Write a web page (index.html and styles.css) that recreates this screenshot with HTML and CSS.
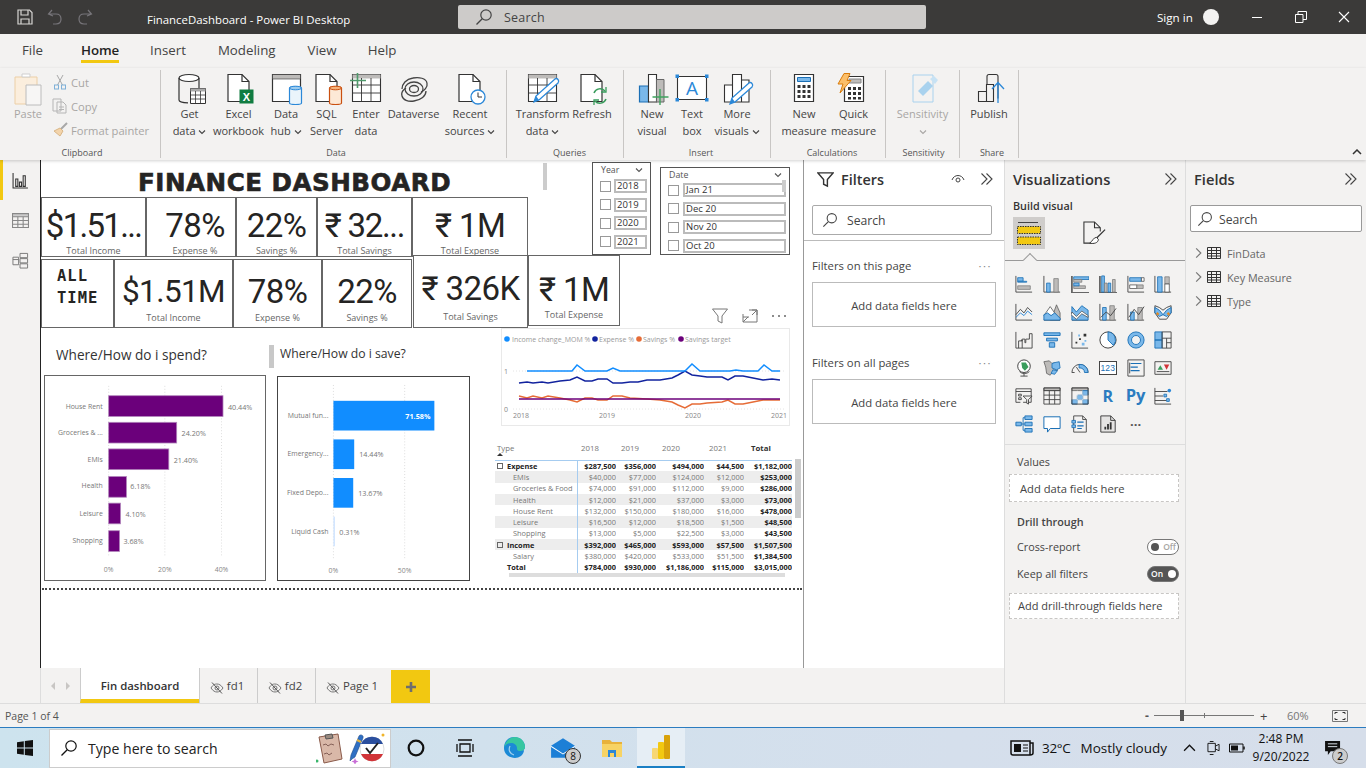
FILE: index.html
```html
<!DOCTYPE html>
<html lang="en">
<head>
<meta charset="utf-8">
<title>FinanceDashboard - Power BI Desktop</title>
<link rel="stylesheet" href="styles.css">
</head>
<body>
<svg class="defs" width="0" height="0" aria-hidden="true">
  <symbol id="search" viewBox="0 0 18 18"><circle cx="11" cy="7" r="5.2" fill="none" stroke="currentColor" stroke-width="1.2"/><path d="M7.2 10.8 1.5 16.5" fill="none" stroke="currentColor" stroke-width="1.3"/></symbol>
  <symbol id="dbl" viewBox="0 0 14 14"><path d="M1.5 1.5 7 7l-5.5 5.5M6.5 1.5 12 7l-5.500 5.500" fill="none" stroke="currentColor" stroke-width="1.1"/></symbol>
  <symbol id="tbl" viewBox="0 0 14 14"><path d="M.5 1.500h13v11H.5zM.5 4.500h13M.5 7.500h13M.500 10h13M4.500 1.500v11M9.500 1.500v11" fill="none" stroke="currentColor"/></symbol>
  <symbol id="chev" viewBox="0 0 8 6"><path d="M1 1.500 4 4.500l3-3" fill="none" stroke="currentColor" stroke-width="1.100"/></symbol>
  <symbol id="hide" viewBox="0 0 14 14"><path d="M1 7c2-3.500 4-4 6-4s4 1 6 4c-2 3-4 4-6 4s-4-1-6-4z" fill="none" stroke="#777"/><circle cx="7" cy="7" r="2" fill="none" stroke="#777"/><path d="M2 1.500 12 12.500" stroke="#555"/></symbol>
  <symbol id="doc" viewBox="0 0 36 34"><path d="M7 1.500h14l7 7v20H7z" fill="#fff" stroke="#333" stroke-width="1.200"/><path d="M21 1.500v7h7" fill="none" stroke="#333" stroke-width="1.200"/></symbol>
</svg>

<header class="titlebar">
  <div class="qa">
    <svg class="qa-ic" viewBox="0 0 16 16"><path d="M1 1h11.500L15 3.500V15H1zM4 1v5h7V1M4 15v-5h8v5" fill="none" stroke="#d8d6d4" stroke-width="1.200"/></svg>
    <svg class="qa-ic dim" viewBox="0 0 16 16"><path d="M5 1 1.500 5 6 7M2 5h7c3 0 5 2 5 5s-2 5-5 5H6" fill="none" stroke="#77757a" stroke-width="1.200"/></svg>
    <svg class="qa-ic dim" viewBox="0 0 16 16"><path d="M11 1l3.500 4L10 7M14 5H7c-3 0-5 2-5 5s2 5 5 5h3" fill="none" stroke="#77757a" stroke-width="1.200"/></svg>
  </div>
  <div class="doc-title">FinanceDashboard - Power BI Desktop</div>
  <div class="search-top"><svg class="s18"><use href="#search"/></svg><span>Search</span></div>
  <div class="signin">Sign in</div>
  <div class="avatar"></div>
  <div class="wc">
    <svg viewBox="0 0 12 12" class="wc-i"><path d="M1 6.500h10" stroke="#fff"/></svg>
    <svg viewBox="0 0 12 12" class="wc-i"><path d="M.5 3.500h7.500v8H.5zM3 3.500v-3h8.500v8H8" fill="none" stroke="#fff"/></svg>
    <svg viewBox="0 0 12 12" class="wc-i"><path d="M1 1l10 10M11 1 1 11" stroke="#fff" stroke-width="1.100"/></svg>
  </div>
</header>

<nav class="tabs">
  <span class="t-file">File</span>
  <span class="t-home">Home</span>
  <span class="t-ins">Insert</span>
  <span class="t-mod">Modeling</span>
  <span class="t-view">View</span>
  <span>Help</span>
</nav>

<section class="ribbon">
  <div class="grp g-clip">
    <div class="grp-body">
      <div class="rb w-paste off">
        <svg class="ri" viewBox="0 0 36 34"><path d="M5 4h22v27H5z" fill="#fbeedd" stroke="#eccfa6"/><path d="M12 4h8V1h-8z" fill="#fff" stroke="#cfcfcf"/><path d="M16 12h15v20H16z" fill="#f7f6f5" stroke="#bcbcbc"/></svg>
        <span>Paste</span>
      </div>
      <div class="clip-col off">
        <div class="clip-row"><svg class="ci" viewBox="0 0 16 16"><path d="M5 1l5.500 10M11 1 5.500 11" stroke="#a9a9a9" fill="none"/><rect x="2.500" y="11" width="4" height="4" fill="none" stroke="#7fb0d8"/><rect x="9.500" y="11" width="4" height="4" fill="none" stroke="#7fb0d8"/></svg><span>Cut</span></div>
        <div class="clip-row"><svg class="ci" viewBox="0 0 16 16"><path d="M1 1h8v12H1zM5 4h6l3 3v8H5z" fill="#f3f2f1" stroke="#b5b5b5"/><path d="M7 9h5M7 11.500h5" stroke="#b5b5b5"/></svg><span>Copy</span></div>
        <div class="clip-row"><svg class="ci" viewBox="0 0 16 16"><path d="M15 1 9 7" stroke="#a8a8a8" stroke-width="2"/><path d="M8 6l3 3-3 5L2 9z" fill="#f3d4ab" stroke="#d9b687"/></svg><span>Format painter</span></div>
      </div>
    </div>
    <div class="grp-label">Clipboard</div>
  </div>

  <div class="grp g-data">
    <div class="grp-body">
      <div class="rb w47"><svg class="ri" viewBox="0 0 36 34"><ellipse cx="17" cy="5" rx="10" ry="3.500" fill="#fff" stroke="#333" stroke-width="1.200"/><path d="M7 5v22c0 1.500 4 2.800 9 2.800M27 5v10" fill="none" stroke="#333" stroke-width="1.200"/><path d="M18.500 15.500h15v15h-15z" fill="#fff" stroke="#333"/><path d="M18.500 15.500h15v3h-15z" fill="#aaa"/><path d="M18.500 22h15M18.500 26h15M23.500 18v12M28.500 18v12" stroke="#333" stroke-width=".8"/></svg><span>Get<br>data <svg class="ca"><use href="#chev"/></svg></span></div>
      <div class="rb w51"><svg class="ri" viewBox="0 0 36 34"><use href="#doc"/><rect x="18.500" y="16.500" width="14" height="14" fill="#107c41"/><text class="xl" x="25.500" y="27.500">X</text></svg><span>Excel<br>workbook</span></div>
      <div class="rb w44"><svg class="ri" viewBox="0 0 36 34"><path d="M4.500 1.500h28v27h-28z" fill="#fff" stroke="#333" stroke-width="1.200"/><path d="M4.500 1.500h28v4.500h-28z" fill="#bdbbb9" stroke="#333" stroke-width=".6"/><path d="M21.500 15c0-2 12-2 12 0v15c0 2-12 2-12 0z" fill="#eaf4fb" stroke="#2b88d8" stroke-width="1.200"/><ellipse cx="27.500" cy="15" rx="6" ry="1.800" fill="#9ccbee" stroke="#2b88d8"/></svg><span>Data<br>hub <svg class="ca"><use href="#chev"/></svg></span></div>
      <div class="rb w37"><svg class="ri" viewBox="0 0 36 34"><use href="#doc"/><path d="M20.500 15c0-2 12-2 12 0v15c0 2-12 2-12 0z" fill="#fde9d6" stroke="#ca5010" stroke-width="1.200"/><ellipse cx="26.500" cy="15" rx="6" ry="1.800" fill="#f6b27a" stroke="#ca5010"/></svg><span>SQL<br>Server</span></div>
      <div class="rb w42"><svg class="ri" viewBox="0 0 36 34"><path d="M4.500 1.500h28v27h-28z" fill="#fff" stroke="#333" stroke-width="1.100"/><path d="M4.500 1.500h28v4h-28z" fill="#bdbbb9"/><path d="M4.500 12h28M4.500 20h28M13.500 5v23M23 5v23" stroke="#333" stroke-width=".9"/><path d="M9.500 0v15M2 7.500h16" stroke="#4f9a6b" stroke-width="1.600"/></svg><span>Enter<br>data</span></div>
      <div class="rb w53"><svg class="ri" viewBox="0 0 36 34"><g fill="none" stroke="#444" stroke-width="1.300"><path d="M6 16c0-5 4-10 11-11 6-1 13 0 14 5 1 4-3 8-6 9M30 18c0 5-5 9-12 10-6 1-11-1-12-5-1-3 1-6 4-8"/><ellipse cx="18" cy="16" rx="9" ry="7"/><ellipse cx="18" cy="16" rx="4.500" ry="3.500"/></g></svg><span>Dataverse</span></div>
      <div class="rb w60"><svg class="ri" viewBox="0 0 36 34"><use href="#doc"/><circle cx="26" cy="24" r="7" fill="#fff" stroke="#2b88d8" stroke-width="1.300"/><path d="M26 19.500V24h4" fill="none" stroke="#333"/></svg><span>Recent<br>sources <svg class="ca"><use href="#chev"/></svg></span></div>
    </div>
    <div class="grp-label">Data</div>
  </div>

  <div class="grp g-query">
    <div class="grp-body">
      <div class="rb w53"><svg class="ri" viewBox="0 0 36 34"><path d="M3.500 1.500h28v27h-28z" fill="#fff" stroke="#333" stroke-width="1.100"/><path d="M3.500 1.500h28v4h-28z" fill="#bdbbb9"/><path d="M3.500 12h28M3.500 20h28M12.500 5v23M22 5v23" stroke="#333" stroke-width=".9"/><path d="M9 29l2-6 19-17c2-1.500 5 1.500 3 4L14 27z" fill="#fff" stroke="#2b88d8" stroke-width="1.300"/><path d="M9 29l2-6 3 4z" fill="#2b88d8"/></svg><span>Transform<br>data <svg class="ca"><use href="#chev"/></svg></span></div>
      <div class="rb w46"><svg class="ri" viewBox="0 0 36 34"><use href="#doc"/><path d="M20 20a6.500 6.500 0 0 1 11-2M32 26a6.500 6.500 0 0 1-11 2" fill="none" stroke="#3a9d5d" stroke-width="1.500"/><path d="M32 14v5h-5M20 32v-5h5" fill="none" stroke="#3a9d5d" stroke-width="1.300"/></svg><span>Refresh</span></div>
    </div>
    <div class="grp-label">Queries</div>
  </div>

  <div class="grp g-insert">
    <div class="grp-body">
      <div class="rb w40"><svg class="ri" viewBox="0 0 36 34"><path d="M5.500 13h9v16h-9z" fill="#7ab8ea" stroke="#1a6fb5" stroke-width="1.200"/><path d="M14.500 1.500h8v27.500h-8z" fill="#fff" stroke="#333" stroke-width="1.100"/><path d="M22.500 6.500h7.500v22.500h-7.500z" fill="#bdbbb9" stroke="#666"/><path d="M26 16v16M18.500 24h16" stroke="#3fa35f" stroke-width="1.400"/></svg><span>New<br>visual</span></div>
      <div class="rb w40"><svg class="ri" viewBox="0 0 36 34"><path d="M3.500 3.500h29v23h-29z" fill="#fff" stroke="#333" stroke-width="1.100"/><g fill="#2b88d8"><rect x="1.500" y="1.500" width="3.500" height="3.500"/><rect x="31" y="1.500" width="3.500" height="3.500"/><rect x="1.500" y="25" width="3.500" height="3.500"/><rect x="31" y="25" width="3.500" height="3.500"/></g><text class="tb-a" x="18" y="22">A</text></svg><span>Text<br>box</span></div>
      <div class="rb w50"><svg class="ri" viewBox="0 0 36 34"><path d="M5.500 12h8v17h-8zM13.500 1.500h9v27.500h-9zM22.500 7h7.500v22h-7.500z" fill="#fff" stroke="#333" stroke-width="1.100"/><path d="M11 31l2-6 17-15c2-1.500 5 1.500 3 4L16 29z" fill="#fff" stroke="#2b88d8" stroke-width="1.300"/><path d="M11 31l2-6 3 4z" fill="#2b88d8"/></svg><span>More<br>visuals <svg class="ca"><use href="#chev"/></svg></span></div>
    </div>
    <div class="grp-label">Insert</div>
  </div>

  <div class="grp g-calc">
    <div class="grp-body">
      <div class="rb w50"><svg class="ri" viewBox="0 0 36 34"><path d="M8.500 1.500h19v27h-19z" fill="#fff" stroke="#333" stroke-width="1.200"/><path d="M11.500 4.500h13v4h-13z" fill="#7ab8ea" stroke="#1a6fb5"/><g fill="#333"><rect x="11.500" y="12" width="3" height="3"/><rect x="16.500" y="12" width="3" height="3"/><rect x="21.500" y="12" width="3" height="3"/><rect x="11.500" y="17" width="3" height="3"/><rect x="16.500" y="17" width="3" height="3"/><rect x="21.500" y="17" width="3" height="3"/><rect x="11.500" y="22" width="3" height="3"/><rect x="16.500" y="22" width="3" height="3"/><rect x="21.500" y="22" width="3" height="3"/></g></svg><span>New<br>measure</span></div>
      <div class="rb w49"><svg class="ri" viewBox="0 0 36 34"><path d="M8.500 3.500h19v25h-19z" fill="#fff" stroke="#333" stroke-width="1.200"/><path d="M13 6h12v4H13z" fill="#bdbbb9" stroke="#888"/><g fill="#333"><rect x="12" y="14" width="3" height="3"/><rect x="17" y="14" width="3" height="3"/><rect x="22" y="14" width="3" height="3"/><rect x="12" y="19" width="3" height="3"/><rect x="17" y="19" width="3" height="3"/><rect x="22" y="19" width="3" height="3"/><rect x="12" y="24" width="3" height="2.500"/><rect x="17" y="24" width="3" height="2.500"/><rect x="22" y="24" width="3" height="2.500"/></g><path d="M8 .500h6l-3 7h4L4 20l3-9H2z" fill="#fbbf6a" stroke="#d97c0c"/></svg><span>Quick<br>measure</span></div>
    </div>
    <div class="grp-label">Calculations</div>
  </div>

  <div class="grp g-sens">
    <div class="grp-body">
      <div class="rb w69 off"><svg class="ri" viewBox="0 0 36 34"><path d="M8 2h20v27H8z" fill="none" stroke="#a9d2ee"/><path d="M13 18 23 8l5 5-10 10z" fill="#a9d2ee"/><path d="M25 6l4-3 4 4-3 4z" fill="#c7e2f4"/></svg><span>Sensitivity<br><svg class="ca"><use href="#chev"/></svg></span></div>
    </div>
    <div class="grp-label">Sensitivity</div>
  </div>

  <div class="grp g-share">
    <div class="grp-body">
      <div class="rb w46"><svg class="ri" viewBox="0 0 36 34"><path d="M7.500 18.500h8v10h-8zM15.500 11.500h7v17h-7zM16 11.500V3.500c0-1 .5-2 2-2h7c1.500 0 2 1 2 2v22" fill="none" stroke="#333" stroke-width="1.100"/><path d="M27 30V10M21 16l6-6.500 6 6.500" fill="none" stroke="#2b88d8" stroke-width="1.300"/></svg><span>Publish</span></div>
    </div>
    <div class="grp-label">Share</div>
  </div>
  <svg class="collapse" viewBox="0 0 10 6"><path d="M1 5l4-4 4 4" fill="none" stroke="#333" stroke-width="1.500"/></svg>
</section>

<div class="main">
  <div class="left">
    <div class="work">
      <aside class="rail">
        <div class="rail-i on"><svg viewBox="0 0 16 16"><path d="M1 1v14h14" fill="none" stroke="#333"/><path d="M3.500 6.500h2v7h-2zM7 9.500h2v4H7zM10.500 3.500h2v10h-2z" fill="none" stroke="#333"/></svg></div>
        <div class="rail-i"><svg viewBox="0 0 16 16"><path d="M.5 1.500h15v13H.5z" fill="none" stroke="#888"/><path d="M.5 1.500h15v3H.5z" fill="#ccc" stroke="#888"/><path d="M.5 8h15M.5 11.500h15M5.500 4.500v10M10.500 4.500v10" stroke="#888"/></svg></div>
        <div class="rail-i"><svg viewBox="0 0 18 18"><path d="M8.500 1.500h8v4.500h-8zM8.500 7h8v4.500h-8zM8.500 12.500h8v4.500h-8zM1 5.500h6v8H1zM1 8h6" fill="none" stroke="#777"/></svg></div>
      </aside>

      <main class="canvas">
        <h1 class="dash-title">FINANCE DASHBOARD</h1>
        <div class="thumb-a"></div>

        <div class="card top k1"><div class="val">$1.51...</div><div class="lab">Total Income</div></div>
        <div class="card top k2"><div class="val">78%</div><div class="lab">Expense %</div></div>
        <div class="card top k3"><div class="val">22%</div><div class="lab">Savings %</div></div>
        <div class="card top k4"><div class="val">₹ 32...</div><div class="lab">Total Savings</div></div>
        <div class="card top k5"><div class="val">₹ 1M</div><div class="lab">Total Expense</div></div>

        <div class="card alltime">ALL<br>TIME</div>
        <div class="card sec k6"><div class="val">$1.51M</div><div class="lab">Total Income</div></div>
        <div class="card sec k7"><div class="val">78%</div><div class="lab">Expense %</div></div>
        <div class="card sec k8"><div class="val">22%</div><div class="lab">Savings %</div></div>
        <div class="card sec k9"><div class="val">₹ 326K</div><div class="lab">Total Savings</div></div>
        <div class="card sec k10"><div class="val">₹ 1M</div><div class="lab">Total Expense</div></div>

        <div class="slicer s-year">
          <div class="sl-head"><span>Year</span><svg class="ca"><use href="#chev"/></svg></div>
          <div class="sl-row"><i></i><b>2018</b></div>
          <div class="sl-row"><i></i><b>2019</b></div>
          <div class="sl-row"><i></i><b>2020</b></div>
          <div class="sl-row"><i></i><b>2021</b></div>
        </div>
        <div class="slicer s-date">
          <div class="sl-head"><span>Date</span><svg class="ca"><use href="#chev"/></svg></div>
          <div class="sl-row"><i></i><b>Jan 21</b></div>
          <div class="sl-row"><i></i><b>Dec 20</b></div>
          <div class="sl-row"><i></i><b>Nov 20</b></div>
          <div class="sl-row"><i></i><b>Oct 20</b></div>
          <div class="sl-thumb"></div>
        </div>

        <div class="vis-tools">
          <svg viewBox="0 0 16 16"><path d="M.5 1h15L10 8v7l-4-2V8z" fill="none" stroke="#777"/></svg>
          <svg viewBox="0 0 16 16"><path d="M1 6V14h14V2H7M1 14l5-5M7 9H1M15 2l-5 5M10 2h5v5" fill="none" stroke="#777"/></svg>
          <svg viewBox="0 0 16 16"><circle cx="2" cy="8" r="1" fill="#666"/><circle cx="8" cy="8" r="1" fill="#666"/><circle cx="14" cy="8" r="1" fill="#666"/></svg>
        </div>

        <svg class="linechart" viewBox="0 0 289 98">
          <rect x=".5" y=".5" width="288" height="97" fill="#fff" stroke="#e9e9e9"/>
          <g class="lg">
            <circle cx="6" cy="11" r="2.800" fill="#118dff"/><text x="11" y="13.500">Income change_MOM %</text>
            <circle cx="94" cy="11" r="2.800" fill="#12239e"/><text x="98" y="13.500">Expense %</text>
            <circle cx="138" cy="11" r="2.800" fill="#e66c37"/><text x="142" y="13.500">Savings %</text>
            <circle cx="180" cy="11" r="2.800" fill="#6b007b"/><text x="184" y="13.500">Savings target</text>
          </g>
          <path d="M12 43H283M12 81H283" stroke="#e4e4e4" stroke-dasharray="1 2"/>
          <g class="ax">
            <text x="5" y="46">1</text><text x="5" y="84">0</text>
            <text x="20" y="90">2018</text><text x="106" y="90">2019</text><text x="192" y="90">2020</text><text x="278" y="90">2021</text>
          </g>
          <polyline fill="none" stroke="#e66c37" stroke-width="1.500" points="18,68 26,70 32,68 41,70 47,68 59,70 69,72 76,74 84,70 91,70 97,72 106,72 112,68 121,68 129,70 146,71 159,72 171,74 177,77 184,80 191,76 199,76 206,75 221,74 227,72 234,76 242,76 252,74 262,72 271,72 279,72"/>
          <polyline fill="none" stroke="#6b007b" stroke-width="1.600" points="18,71 279,71"/>
          <polyline fill="none" stroke="#12239e" stroke-width="1.500" points="18,55 26,54 32,55 41,54 47,55 59,53 69,52 76,49 84,53 91,53 97,51 106,51 112,55 121,55 129,54 137,54 146,52 159,52 171,50 177,47 184,43 191,47 199,48 206,49 221,49 227,52 234,48 242,48 252,50 262,52 271,51 279,52"/>
          <polyline fill="none" stroke="#118dff" stroke-width="1.500" points="26,43 71,43 76,37 84,43 106,43 112,40 119,43 184,43 191,36 199,43 229,43 235,42 242,43 257,43 263,37 271,43 279,43"/>
        </svg>

        <div class="hd h-spend">Where/How do i spend?</div>
        <div class="hd-bar"></div>
        <div class="hd h-save">Where/How do i save?</div>

        <svg class="chart c-spend" viewBox="0 0 222 207">
          <path class="gl" d="M64 10V183M121 10V183M178.500 10V183"/>
          <g class="bar-p">
            <rect x="64" y="20" width="116" height="21"/><rect x="64" y="47" width="69" height="21"/><rect x="64" y="74" width="61" height="21"/><rect x="64" y="102" width="18" height="21"/><rect x="64" y="129" width="12" height="21"/><rect x="64" y="157" width="11" height="21"/>
          </g>
          <g class="cat">
            <text x="58" y="33">House Rent</text><text x="58" y="60">Groceries &amp; ...</text><text x="58" y="87">EMIs</text><text x="58" y="114">Health</text><text x="58" y="142">Leisure</text><text x="58" y="169">Shopping</text>
          </g>
          <g class="vl">
            <text x="185" y="34">40.44%</text><text x="138" y="61">24.20%</text><text x="130" y="88">21.40%</text><text x="86" y="115">6.18%</text><text x="81" y="143">4.10%</text><text x="79" y="170">3.68%</text>
          </g>
          <g class="ax mid"><text x="64" y="199">0%</text><text x="121" y="199">20%</text><text x="178.500" y="199">40%</text></g>
        </svg>

        <svg class="chart c-save" viewBox="0 0 193 205">
          <path class="gl" d="M56 8V183M128 8V183"/>
          <g class="bar-b">
            <rect x="56" y="24" width="102" height="30"/><rect x="56" y="63" width="21" height="30"/><rect x="56" y="102" width="20" height="30"/>
          </g>
          <rect x="56" y="141" width="1.500" height="30" fill="#cfe4ff"/>
          <g class="cat">
            <text x="51" y="41">Mutual fun...</text><text x="51" y="80">Emergency...</text><text x="51" y="119">Fixed Depo...</text><text x="51" y="159">Liquid Cash</text>
          </g>
          <g class="vl">
            <text class="inb" x="154" y="42">71.58%</text><text x="82" y="81">14.44%</text><text x="81" y="120">13.67%</text><text x="62" y="160">0.31%</text>
          </g>
          <g class="ax mid"><text x="56" y="198">0%</text><text x="128" y="198">50%</text></g>
        </svg>

        <div class="matrix">
          <table>
            <thead><tr><th class="ty">Type</th><th>2018</th><th>2019</th><th>2020</th><th>2021</th><th class="tt">Total</th></tr></thead>
            <tbody>
              <tr class="grp-r"><td><i class="box"></i>Expense</td><td>$287,500</td><td>$356,000</td><td>$494,000</td><td>$44,500</td><td>$1,182,000</td></tr>
              <tr class="alt"><td class="sub">EMIs</td><td>$40,000</td><td>$77,000</td><td>$124,000</td><td>$12,000</td><td class="tt">$253,000</td></tr>
              <tr><td class="sub">Groceries &amp; Food</td><td>$74,000</td><td>$91,000</td><td>$112,000</td><td>$9,000</td><td class="tt">$286,000</td></tr>
              <tr class="alt"><td class="sub">Health</td><td>$12,000</td><td>$21,000</td><td>$37,000</td><td>$3,000</td><td class="tt">$73,000</td></tr>
              <tr><td class="sub">House Rent</td><td>$132,000</td><td>$150,000</td><td>$180,000</td><td>$16,000</td><td class="tt">$478,000</td></tr>
              <tr class="alt"><td class="sub">Leisure</td><td>$16,500</td><td>$12,000</td><td>$18,500</td><td>$1,500</td><td class="tt">$48,500</td></tr>
              <tr><td class="sub">Shopping</td><td>$13,000</td><td>$5,000</td><td>$22,500</td><td>$3,000</td><td class="tt">$43,500</td></tr>
              <tr class="grp-r alt"><td><i class="box"></i>Income</td><td>$392,000</td><td>$465,000</td><td>$593,000</td><td>$57,500</td><td>$1,507,500</td></tr>
              <tr><td class="sub">Salary</td><td>$380,000</td><td>$420,000</td><td>$533,000</td><td>$51,500</td><td class="tt">$1,384,500</td></tr>
              <tr class="grp-r tot"><td>Total</td><td>$784,000</td><td>$930,000</td><td>$1,186,000</td><td>$115,000</td><td>$3,015,000</td></tr>
            </tbody>
          </table>
          <div class="sb-v"></div>
          <div class="sb-h"></div>
        </div>

        <div class="dotted"></div>
      </main>

      <aside class="filters">
        <div class="f-head">
          <svg class="f-fun" viewBox="0 0 18 18"><path d="M1 2h16l-6 7v7l-4-2V9z" fill="none" stroke="#333" stroke-width="1.500"/></svg>
          <span class="f-title">Filters</span>
          <svg class="f-eye" viewBox="0 0 14 10"><path d="M1 6c2-6 10-6 12 0" fill="none" stroke="#444"/><circle cx="7" cy="6" r="2" fill="none" stroke="#444"/></svg>
          <svg class="dbl"><use href="#dbl"/></svg>
        </div>
        <div class="f-search"><svg class="s16"><use href="#search"/></svg><span>Search</span></div>
        <div class="f-sec"><span>Filters on this page</span><span class="dots">···</span></div>
        <div class="f-box">Add data fields here</div>
        <div class="f-sec second"><span>Filters on all pages</span><span class="dots">···</span></div>
        <div class="f-box">Add data fields here</div>
      </aside>
    </div>

    <div class="pages">
      <div class="nav"><span class="arrow l"></span><span class="arrow r"></span></div>
      <div class="pg active">Fin dashboard</div>
      <div class="pg p-fd"><svg class="hide"><use href="#hide"/></svg>fd1</div>
      <div class="pg p-fd"><svg class="hide"><use href="#hide"/></svg>fd2</div>
      <div class="pg p-one"><svg class="hide"><use href="#hide"/></svg>Page 1</div>
      <div class="pg-add"><svg viewBox="0 0 12 12"><path d="M6 1v10M1 6h10" stroke="#6e6e6e" stroke-width="2.600"/></svg></div>
    </div>
  </div>

  <aside class="viz">
    <div class="p-head"><span>Visualizations</span><svg class="dbl"><use href="#dbl"/></svg></div>
    <div class="build">Build visual</div>
    <div class="build-tabs">
      <div class="bt on"><svg viewBox="0 0 24 24"><path d="M1 1.500h20" stroke="#444"/><rect x=".5" y="5.500" width="23" height="7" fill="#f2c811" stroke="#333" stroke-dasharray="1.500 1"/><rect x=".5" y="16" width="23" height="7.500" fill="#f2c811" stroke="#333" stroke-dasharray="1.500 1"/></svg></div>
      <div class="bt fmt"><svg viewBox="0 0 26 26"><path d="M12 23H2V1h11l6 6v4M13 1v6h6" fill="none" stroke="#333" stroke-width="1.100"/><path d="M24 9 15 18" stroke="#333" stroke-width="1.300"/><path d="M15 17c-3 0-4 4-7 6 4 1 9 0 9-4z" fill="#fff" stroke="#333"/></svg></div>
    </div>
    <div class="notch-line"></div>
    <div class="vgrid">
      <svg viewBox="0 0 20 20"><path class="k" d="M1 1v18h18"/><path class="bl" d="M3 3h6v4H3z"/><path class="gy" d="M3 12h14v4H3z"/><path class="bl" d="M3 7h10v1H3z"/></svg>
      <svg viewBox="0 0 20 20"><path class="k" d="M1 1v18h18"/><path class="bl" d="M4 9h4v10H4z"/><path class="gy" d="M12 4h5v15h-5z"/></svg>
      <svg viewBox="0 0 20 20"><path class="hv" d="M1 1v19h19"/><path class="bl" d="M3 2h17v3H3z"/><path class="gy" d="M3 5h9v3H3zM3 12h13v3H3z"/><path class="bl" d="M3 9h6v3H3z"/></svg>
      <svg viewBox="0 0 20 20"><path class="hv" d="M1 1v19h19"/><path class="bl" d="M3 1h3v18H3zM10 9h3v10h-3z"/><path class="gy" d="M6 9h3v10H6zM15 5h3v14h-3z"/></svg>
      <svg viewBox="0 0 20 20"><path class="k" d="M1 1v18h18"/><path class="bl" d="M3 3h13v4H3z"/><path class="wt" d="M16 3h3v4h-3z"/><path class="wt" d="M3 11h8v4H3z"/><path class="gy" d="M11 11h7v4h-7z"/></svg>
      <svg viewBox="0 0 20 20"><path class="k" d="M1 1v18h18"/><path class="bl" d="M4 2h5v17H4z"/><path class="gy" d="M12 2h5v8h-5z"/><path class="wt" d="M12 10h5v9h-5z"/></svg>

      <svg viewBox="0 0 20 20"><path class="k" d="M1 1v18h18"/><path class="k" d="M1 13l5-6 4 4 4-6 5 5"/><path class="kb" d="M1 16l5-5 4 3 4-5 5 4"/></svg>
      <svg viewBox="0 0 20 20"><path class="k" d="M1 19h18"/><path class="gy2" d="M8 9l3 4 4-11 4 9v8H8z"/><path class="wt" d="M1 14 8 4l7 10H1z"/><path class="bl2" d="M1 19v-6l4-2 4 3 4-3 6 6v2z"/></svg>
      <svg viewBox="0 0 20 20"><path class="k" d="M1 19h18"/><path class="bl2" d="M1 4l5 6 6-7 7 5v11H1z"/><path class="wt" d="M1 10l5 5 6-6 7 5v2l-7-4-6 6-6-5z"/></svg>
      <svg viewBox="0 0 20 20"><path class="k" d="M1 1v18h18"/><path class="bl" d="M4 5h4v14H4z"/><path class="gy" d="M12 3h5v16h-5z"/><path class="k" d="M2 16l6-6 5 4 6-8"/></svg>
      <svg viewBox="0 0 20 20"><path class="k" d="M1 1v18h18"/><path class="bl" d="M4 10h4v9H4z"/><path class="gy" d="M12 5h5v14h-5z"/><path class="k" d="M2 16l6-9 5 6 6-9"/></svg>
      <svg viewBox="0 0 20 20"><path class="k" d="M1 3l5 2 4 3 4-3 5-2v8l-5 7H6l-5-7z"/><path class="bl2" d="M1 5l5 3 4 5 4-5 5-3v6l-5 4-4-2-4 2-5-4z"/><path d="M3 11l2 2M15 11l2 2" stroke="#e88a1f" stroke-width="2.500"/></svg>

      <svg viewBox="0 0 20 20"><path class="k" d="M1 1v18h18"/><path class="k" d="M4 19v-8h4v-1h-1v1M8 19V9h3v4h1V9h4V3h3v16"/></svg>
      <svg viewBox="0 0 20 20"><path class="bl2" d="M1 2h18v3H1z"/><path class="bl2" d="M4 8h12v3H4z"/><path class="bl2" d="M7 13h6v5H7z"/></svg>
      <svg viewBox="0 0 20 20"><path class="k" d="M1 1v18h18"/><path d="M5 12h2v2H5zM9 8h2v2H9zM14 3h3v3h-3z" fill="#333"/><path d="M8 4h2v2H8zM12 13h3v3h-3zM15 10h2v2h-2z" fill="#7ab8ea"/></svg>
      <svg viewBox="0 0 20 20"><circle cx="10" cy="10" r="9" fill="#fff" stroke="#333"/><path d="M10 10V1a9 9 0 0 1 6 15z" fill="#7ab8ea" stroke="#1a6fb5"/></svg>
      <svg viewBox="0 0 20 20"><circle cx="10" cy="10" r="7" fill="none" stroke="#7ab8ea" stroke-width="4"/><circle cx="10" cy="10" r="9" fill="none" stroke="#1a6fb5"/><circle cx="10" cy="10" r="5" fill="none" stroke="#1a6fb5"/></svg>
      <svg viewBox="0 0 20 20"><path class="bl2" d="M1 1h8v9H1zM1 10h8v9H1z"/><path class="k" d="M9 1h10v18H9zM9 8h10M14 8v11M14 13h5"/></svg>

      <svg viewBox="0 0 20 20"><circle cx="10" cy="8" r="7" fill="#fff" stroke="#333"/><path d="M7 4h5l3 5-4 4-3-3z" fill="#3a9d5d"/><path class="k" d="M16 14a8 8 0 0 1-11 0M10 16v3M6 19h8"/></svg>
      <svg viewBox="0 0 20 20"><path class="gy2" d="M1 3l6-1 3 3 3-1 2 2 1 7-5 1-3 4-4-2-1-7z"/><path class="bl" d="M10 5l3-1 5-1 1 7-4 2-5-2z"/><path class="bl" d="M9 16l2-4 5 1-3 4z"/></svg>
      <svg viewBox="0 0 20 20"><path class="k" d="M1 15a9 9 0 0 1 18 0"/><path class="bl2" d="M9 6a9 9 0 0 1 10 9h-4a5 5 0 0 0-6-5z"/><path class="k" d="M10 15 6 9"/><path class="k" d="M1 15h3"/></svg>
      <div class="v-card"><span>123</span></div>
      <svg viewBox="0 0 20 20"><path class="k" d="M1 1h18v18H1z"/><path class="bl3" d="M4 5h12M4 9h8M4 13h10"/><path class="k" d="M3 4v12"/></svg>
      <svg viewBox="0 0 20 20"><path class="k" d="M1 3h18v14H1zM3 14h14"/><path d="M4 12l3-5 3 5z" fill="#3a9d5d"/><path d="M11 6h6l-3 6z" fill="#d13438"/></svg>

      <svg viewBox="0 0 20 20"><path class="k" d="M1 2h17v15H9M1 2v15h5M1 5h17"/><path class="k" d="M4 8h3v2H4zM4 12h3v2H4z"/><path class="kw" d="M9 10h10l-4 4v5l-2-1v-4z"/></svg>
      <svg viewBox="0 0 20 20"><path class="gy2" d="M1 1h18v3H1z"/><path class="k" d="M1 1h18v18H1zM1 4h18M1 9h18M1 14h18M7 4v15M13 4v15"/></svg>
      <svg viewBox="0 0 20 20"><path class="gy2" d="M1 1h18v3H1z"/><path class="bl" d="M7 9h6v5H7zM13 4h6v5h-6zM13 14h6v5h-6zM1 14h6v5H1z"/><path class="bl3t" d="M7 4v15M13 4v15M1 9h18M1 14h18"/><path class="k" d="M1 1h18v18H1z"/></svg>
      <div class="v-txt v-r">R</div>
      <div class="v-txt v-py">Py</div>
      <svg viewBox="0 0 20 20"><path class="k" d="M1 1v18h18M1 5h14M1 10h9M1 15h13"/><circle cx="17" cy="4" r="2" fill="#2b88d8"/><path class="bl" d="M11 8h3v3h-3zM14 13h3v3h-3z"/></svg>

      <svg viewBox="0 0 20 20"><path class="bl2" d="M1 8h6v4H1zM11 1h8v4h-8zM11 8h8v4h-8zM11 15h8v4h-8z"/><path d="M7 10h4M9 3v14M9 3h2M9 17h2" stroke="#1a6fb5" fill="none"/></svg>
      <svg viewBox="0 0 20 20"><path d="M1 2h18v13H8l-3 4v-4H1z" fill="#fff" stroke="#1a6fb5" stroke-width="1.100"/></svg>
      <svg viewBox="0 0 20 20"><path class="k" d="M3 1h10l4 4v14H3zM13 1v4h4"/><path class="bl" d="M1 6h4v3H1z"/><path class="bl3" d="M7 8h7M7 12h7M7 15h5"/><path class="bl" d="M1 11h4v3H1z"/></svg>
      <svg viewBox="0 0 20 20"><path d="M2 1h11l5 5v13H2z" fill="#e5e4e3" stroke="#333"/><path d="M13 1v5h5" fill="none" stroke="#333"/><path d="M6 13h2v3H6zM9 10h2v6H9zM12 8h2v8h-2z" fill="#333"/></svg>
      <div class="v-more">···</div>
    </div>
    <div class="v-sep"></div>
    <div class="w-label">Values</div>
    <div class="dash">Add data fields here</div>
    <div class="w-label drill">Drill through</div>
    <div class="tog-row"><span>Cross-report</span><div class="tog off"><i></i><b>Off</b></div></div>
    <div class="tog-row"><span>Keep all filters</span><div class="tog on"><b>On</b><i></i></div></div>
    <div class="dash second">Add drill-through fields here</div>
  </aside>

  <aside class="fields">
    <div class="p-head"><span>Fields</span><svg class="dbl"><use href="#dbl"/></svg></div>
    <div class="fd-search"><svg class="s16"><use href="#search"/></svg><span>Search</span></div>
    <div class="fd-row"><svg class="fd-chev" viewBox="0 0 6 10"><path d="M1 1l4 4-4 4" fill="none" stroke="#777"/></svg><svg class="fd-t"><use href="#tbl"/></svg><span>FinData</span></div>
    <div class="fd-row"><svg class="fd-chev" viewBox="0 0 6 10"><path d="M1 1l4 4-4 4" fill="none" stroke="#777"/></svg><svg class="fd-t"><use href="#tbl"/></svg><span>Key Measure</span></div>
    <div class="fd-row"><svg class="fd-chev" viewBox="0 0 6 10"><path d="M1 1l4 4-4 4" fill="none" stroke="#777"/></svg><svg class="fd-t"><use href="#tbl"/></svg><span>Type</span></div>
  </aside>
</div>

<footer class="status">
  <span>Page 1 of 4</span>
  <div class="zoom">
    <b class="z-m">-</b>
    <div class="z-track"><i class="z-thumb"></i><i class="z-tick"></i></div>
    <b class="z-p">+</b>
    <span class="z-v">60%</span>
    <svg class="z-fit" viewBox="0 0 16 12"><path d="M.5.500h15v11H.5z" fill="none" stroke="#777"/><path d="M3 4V2.500h2.500M13 4V2.500h-2.500M3 8v1.500h2.500M13 8v1.500h-2.500" fill="none" stroke="#333"/></svg>
  </div>
</footer>

<div class="taskbar">
  <div class="tb-start"><svg viewBox="0 0 16 16"><path d="M0 2.200 6.800 1.200V7.500H0zM7.800 1 16 0v7.500H7.800zM0 8.500h6.800v6.300L0 13.800zM7.800 8.500H16V16L7.800 15z" fill="#111"/></svg></div>
  <div class="tb-search">
    <svg class="tb-g"><use href="#search"/></svg>
    <span>Type here to search</span>
    <svg class="tb-deco" viewBox="0 0 72 32">
      <path d="M3 5l19-3 4 25-18 4z" fill="#d9b8a8" stroke="#8a5a4a"/><path d="M9 3l7-1 1 4-7 1z" fill="#9a8a80" stroke="#555"/><path d="M7 13l3-1 2 2 3-2 3 1M8 22l3-1 2 2 3-2" fill="none" stroke="#704a44" stroke-width=".8"/>
      <path d="M36 27l-2 2 1-6 8-19c1-2 5-1 4 2l-8 19z" fill="#2f6fc4" stroke="#1d4a86" stroke-width=".6"/><path d="M41 8l4 2" stroke="#e8b339" stroke-width="2"/>
      <circle cx="56" cy="17" r="12" fill="#fff" stroke="#ddd"/><path d="M45 12a12 12 0 0 1 22 0z" fill="#2b4f9e"/><path d="M45 22a12 12 0 0 0 22 0z" fill="#d13438"/><path d="M50 16l4 5 8-10" fill="none" stroke="#222" stroke-width="2"/>
      <circle cx="67" cy="3" r="1.500" fill="#f0b429"/><circle cx="1" cy="29" r="1.500" fill="#3ab66b"/><path d="M39 26l1 2.500 2.500 1-2.500 1-1 2.500-1-2.500-2.500-1 2.500-1z" fill="#c86dd7"/>
    </svg>
  </div>
  <div class="tb-apps">
    <div class="app"><svg viewBox="0 0 16 16"><circle cx="8" cy="8" r="6.500" fill="none" stroke="#111" stroke-width="2"/></svg></div>
    <div class="app"><svg viewBox="0 0 18 18"><path d="M4 5h10v8H4zM2 1h14M2 17h14M1 5v8M17 5v8" fill="none" stroke="#111" stroke-width="1.300"/></svg></div>
    <div class="app a-edge"><svg viewBox="0 0 24 24"><path d="M22 14c0 5-5 8-9 8-6 0-11-4-11-10S6 1 12 1c6 0 11 4 11 10 0 3-3 4-6 4-2 0-3-1-3-1 2 1 7 1 8-0z" fill="#1c8ad6"/><path d="M2 12C3 5 8 1 13 1c5 0 10 4 10 10 0 3-3 4-5 4-3 0-3-2-3-3 0-3-3-5-6-5-3 0-6 2-7 5z" fill="#37c6a0"/><path d="M8 10c-2 4 0 8 4 9" fill="none" stroke="#fff" stroke-width="1.200" opacity=".6"/></svg></div>
    <div class="app a-mail"><svg viewBox="0 0 24 20"><path d="M1 8 12 1l11 7v11H1z" fill="#1c7fd6"/><path d="M1 8l11 7 11-7v1l-11 7L1 9z" fill="#fff"/></svg><span class="badge">8</span></div>
    <div class="app"><svg viewBox="0 0 22 20"><path d="M1 2h8l2 2h10v3H1z" fill="#e8b23b"/><path d="M1 6h20v13H1z" fill="#f7d364"/><path d="M7 12h8v7h-2v-4H9v4H7z" fill="#2b88d8"/></svg></div>
    <div class="app a-pbi"><svg viewBox="0 0 20 24"><rect x="1" y="13" width="6" height="11" rx="1" fill="#f7d774"/><rect x="7" y="7" width="6" height="17" rx="1" fill="#f2c811"/><rect x="13" y="0" width="6" height="24" rx="1" fill="#d9a20a"/></svg></div>
  </div>
  <div class="tray">
    <svg class="news" viewBox="0 0 24 16"><path d="M1 1h19v14H3c-1 0-2-1-2-2zM20 3h3v10c0 1-1 2-3 2" fill="none" stroke="#111" stroke-width="1.500"/><path d="M4 4h7v8H4z" fill="#111"/><path d="M13 5h5M13 8h5M13 11h5" stroke="#111"/></svg>
    <span class="temp">32°C</span>
    <span class="wx">Mostly cloudy</span>
    <svg class="tr-up" viewBox="0 0 12 7"><path d="M1 6l5-5 5 5" fill="none" stroke="#111" stroke-width="1.200"/></svg>
    <svg class="tr-meet" viewBox="0 0 14 16"><path d="M1 3h8v9H1z" fill="none" stroke="#111"/><path d="M9 6l4-2v7l-4-2M3 1h4M3 15h4" fill="none" stroke="#111"/></svg>
    <svg class="tr-bat" viewBox="0 0 16 10"><path d="M.5 1h13.500v8H.5z" fill="none" stroke="#111"/><path d="M2 2.500h7v5H2z" fill="#111"/><path d="M15 3.500v3" stroke="#111" stroke-width="1.500"/></svg>
    <div class="clock"><span>2:48 PM</span><span>9/20/2022</span></div>
    <div class="notif"><svg viewBox="0 0 18 16"><path d="M0 0h16v11H6l-3 4v-4H0z" fill="#111"/><path d="M3 3h10M3 6h10" stroke="#dfe6ee"/></svg><span>2</span></div>
  </div>
</div>
</body>
</html>
```

FILE: styles.css
```css
* { box-sizing: border-box; }
html, body { margin: 0; height: 768px; overflow: hidden; }
body {
  width: 1366px;
  display: flex;
  flex-direction: column;
  font-family: "Open Sans", "Noto Sans", sans-serif;
  color: #333;
  background: #f3f2f1;
}
.defs { position: absolute; }
i, b { font-style: normal; font-weight: normal; }

/* title bar */
.titlebar { height: 34px; background: #3b3a39; display: flex; align-items: center; color: #fff; flex: none; }
.qa { width: 147px; display: flex; gap: 14px; padding-left: 17px; }
.qa-ic { width: 16px; height: 16px; }
.doc-title { width: 311px; font-size: 11.400px; padding-top: 4px; }
.search-top { width: 468px; height: 24px; background: #cdcbc9; border-radius: 2px; display: flex; align-items: center; padding-left: 17px; gap: 11px; color: #444; font-size: 12.5px; letter-spacing: .2px; }
.s18 { width: 18px; height: 18px; }
.signin { margin-left: 231px; font-size: 11.6px; width: 46px; }
.avatar { width: 16px; height: 16px; border-radius: 50%; background: #f3f2f1; }
.wc { margin-left: 32px; width: 99px; display: flex; justify-content: space-between; }
.wc-i { width: 12px; height: 12px; }

/* tabs */
.tabs { height: 34px; flex: none; display: flex; align-items: center; padding: 0 0 2px 22px; font-size: 13.300px; color: #444; }
.tabs span { position: relative; }
.t-file { margin-right: 38px; }
.t-home { margin-right: 31px; color: #222; font-weight: 600; width: 38px; letter-spacing: -.1px; }
.t-home::after { content: ""; position: absolute; left: 0; right: 0; bottom: -4px; height: 3px; background: #f2c811; }
.t-ins { margin-right: 32px; }
.t-mod { margin-right: 32px; }
.t-view { margin-right: 31px; }

/* ribbon */
.ribbon { height: 92px; flex: none; display: flex; position: relative; box-shadow: 0 1px 3px rgba(0,0,0,.18); z-index: 2; background: #f3f2f1; }
.grp { display: flex; flex-direction: column; border-right: 1px solid #c8c6c4; margin: 2px 0; height: 88px; }
.grp-body { display: flex; height: 76px; flex: none; }
.grp-label { flex: none; text-align: center; font-size: 9px; color: #555; line-height: 14px; height: 14px; }
.g-clip { width: 161px; padding-left: 4px; }
.g-data { width: 346px; padding-left: 5px; }
.g-query { width: 117px; padding-left: 9px; }
.g-insert { width: 147px; padding-left: 8px; }
.g-calc { width: 115px; padding-left: 8px; }
.g-sens { width: 74px; padding-left: 2px; }
.g-share { width: 59px; padding-left: 6px; }
.rb { display: flex; flex-direction: column; align-items: center; font-size: 11px; line-height: 16.500px; text-align: center; color: #444; white-space: nowrap; }
.rb span { margin-top: -1px; }
.ri { width: 36px; height: 34px; margin-top: 3px; flex: none; }
.w-paste { width: 48px; }
.w37 { width: 37px; } .w40 { width: 40px; } .w42 { width: 42px; } .w44 { width: 44px; } .w46 { width: 46px; }
.w47 { width: 47px; } .w49 { width: 49px; } .w50 { width: 50px; } .w51 { width: 51px; } .w53 { width: 53px; } .w60 { width: 60px; } .w69 { width: 69px; }
.off, .off .rb { color: #a8a6a4; }
.ca { width: 8px; height: 6px; }
.clip-col { display: flex; flex-direction: column; font-size: 11.200px; }
.clip-row { height: 24px; flex: none; display: flex; align-items: center; gap: 3px; white-space: nowrap; }
.ci { width: 16px; height: 16px; }
.xl { fill: #fff; font: bold 11px "Liberation Sans", sans-serif; text-anchor: middle; }
.tb-a { fill: #2b88d8; font: 19px "Open Sans", sans-serif; text-anchor: middle; }
.collapse { position: absolute; right: 4px; bottom: 5px; width: 10px; height: 6px; }

/* main */
.main { height: 543px; flex: none; display: flex; }
.left { width: 1004px; display: flex; flex-direction: column; }
.work { height: 508px; display: flex; }
.rail { width: 40px; display: flex; flex-direction: column; }
.rail-i { height: 40px; display: flex; align-items: center; justify-content: center; }
.rail-i svg { width: 17px; height: 17px; }
.rail-i.on { box-shadow: inset 3px 0 0 #f2c811; }

/* canvas */
.canvas { position: relative; width: 764px; background: #fff; border-left: 1px solid #222; border-right: 1px solid #999; flex: none; }
.canvas > * { position: absolute; }
.dash-title { margin: 0; left: 97px; top: 9px; font: bold 24.600px/28px "DejaVu Sans", sans-serif; color: #252423; letter-spacing: .5px; white-space: nowrap; -webkit-text-stroke: .6px #252423; }
.thumb-a { left: 502px; top: 3px; width: 4px; height: 27px; background: #ccc; }
.card { border: 1.500px solid #666; background: #fff; display: flex; flex-direction: column; align-items: center; color: #252423; }
.val { font: 400 33px/38px Roboto, sans-serif; white-space: nowrap; letter-spacing: -.6px; color: #252423; }
.lab { font-size: 9px; line-height: 11px; color: #666; white-space: nowrap; }
.top { top: 37px; height: 60px; padding-top: 9px; }
.sec .lab { margin-top: 1px; }
.k1 { left: 0; width: 105px; } .k2 { left: 105px; width: 90px; padding-left: 8px; } .k3 { left: 195px; width: 81px; } .k4 { left: 276px; width: 95px; } .k5 { left: 371px; width: 116px; }
.k1 .val { letter-spacing: -1.700px; }
.k4 .val { letter-spacing: -1.300px; }
.alltime { left: 0; top: 99px; width: 73px; height: 69px; font: bold 15.500px/22px "DejaVu Sans Mono", monospace; letter-spacing: 1px; padding: 5px 0 0 15px; display: block; }
.sec { padding-top: 13px; top: 99px; height: 69px; }
.k6 { left: 73px; width: 119px; } .k7 { left: 192px; width: 89px; } .k8 { left: 281px; width: 90px; }
.k9 { left: 372px; width: 115px; top: 95px; height: 73px; padding-top: 14px; }
.k10 { left: 487px; width: 92px; top: 95px; height: 71px; padding-top: 15px; }
.k9 .lab { margin-top: 3px; }
.k10 .lab { margin-top: 0; }
.k6 .val { font-size: 31.500px; }

.slicer { border: 1.500px solid #555; padding: 0 3px 0 7px; background: #fff; }
.s-year { left: 551px; top: 2px; width: 59px; height: 93px; }
.s-date { left: 619px; top: 7px; width: 130px; height: 88px; }
.sl-head { display: flex; justify-content: space-between; align-items: center; font-size: 8.800px; height: 13px; color: #555; padding: 0 4px 0 1px; }
.s-year .sl-head { height: 14px; }
.sl-row { display: flex; align-items: center; gap: 3px; height: 18.500px; }
.sl-row i { width: 11px; height: 11px; border: 1px solid #999; flex: none; background: #fff; }
.sl-row b { flex: 1; height: 14px; border: 2px solid #bbb; font-size: 9.500px; line-height: 10px; padding-left: 1px; color: #333; }
.s-date .sl-row { gap: 4px; height: 18.500px; }
.sl-thumb { position: absolute; right: 3px; top: 12px; width: 4px; height: 12px; background: #ccc; }

.vis-tools { left: 671px; top: 148px; width: 75px; display: flex; justify-content: space-between; align-items: center; }
.vis-tools svg { width: 16px; height: 16px; }

.linechart { left: 460px; top: 168px; width: 289px; height: 98px; }
.lg text { font: 7px "Open Sans", sans-serif; fill: #999; }
.ax text { font: 7px "Open Sans", sans-serif; fill: #888; text-anchor: middle; }
.hd { font-size: 13.600px; color: #333; white-space: nowrap; }
.h-spend { left: 15px; top: 185px; }
.h-save { left: 239px; top: 185px; font-size: 12.200px; }
.hd-bar { left: 228px; top: 185px; width: 5px; height: 23px; background: #c8c8c8; }
.chart { background: #fff; border: 1.500px solid #666; }
.c-spend { left: 3px; top: 215px; width: 222px; height: 206px; }
.c-save { left: 236px; top: 216px; width: 193px; height: 205px; border-color: #444; }
.gl { stroke: #ddd; stroke-dasharray: 1 2; fill: none; }
.bar-p rect { fill: #6b007b; stroke: #b184bb; stroke-width: .8; }
.bar-b rect { fill: #118dff; }
.cat text { font: 7px "Open Sans", sans-serif; fill: #777; text-anchor: end; }
.vl text { font: 7.300px "Open Sans", sans-serif; fill: #777; }
.vl text.inb { fill: #fff; font-weight: 700; text-anchor: end; }
.mid text { text-anchor: middle; }

.matrix { left: 454px; top: 283px; width: 307px; height: 135px; }
.matrix table { border-collapse: collapse; table-layout: fixed; width: 297px; font-size: 7.400px; color: #777; }
.matrix th { font-weight: 400; height: 17px; text-align: center; border-bottom: 1px solid #a6ccf0; padding: 0; font-size: 7.800px; line-height: 11px; vertical-align: top; position: relative; }
.matrix th:nth-child(1) { width: 82px; text-align: left; padding-left: 2px; }
.matrix th:nth-child(2) { width: 39px; padding-right: 13px; }
.matrix th:nth-child(3) { width: 40px; padding-right: 12px; }
.matrix th:nth-child(4) { width: 48px; padding-right: 18px; }
.matrix th:nth-child(5) { width: 40px; padding-right: 12px; }
.matrix th:nth-child(6) { width: 48px; text-align: left; color: #333; font-weight: 700; padding-left: 7px; }
.matrix .ty::after { content: ""; position: absolute; left: 2px; top: 10px; border: 3px solid transparent; border-top: 0; border-bottom-color: #333; }
.matrix td { height: 11.300px; line-height: 10px; text-align: right; padding: 0; white-space: nowrap; overflow: hidden; }
.matrix td:first-child { text-align: left; border-right: 1px solid #a6ccf0; padding-left: 10px; }
.matrix td.sub { padding-left: 18px; }
.matrix .tot td:first-child { padding-left: 12px; }
.matrix .alt td { background: #ededed; }
.matrix .grp-r td { color: #222; font-weight: 700; }
.matrix .tt { color: #222; font-weight: 700; }
.box { display: inline-block; width: 6px; height: 6px; border: 1px solid #666; margin: 0 4px 0 -8px; vertical-align: -.5px; }
.sb-v { position: absolute; right: 1px; top: 16px; width: 6px; height: 59px; background: #ccc; }
.sb-h { position: absolute; left: 14px; bottom: 1px; width: 276px; height: 4px; background: #ddd; }
.dotted { left: 1px; top: 428px; width: 760px; border-top: 2px dotted #444; }

/* filters */
.filters { width: 200px; background: #fff; padding: 0 8px; flex: none; }
.f-head { height: 38px; display: flex; align-items: center; padding: 0 2px 0 5px; }
.f-fun { width: 17px; height: 17px; }
.f-title { margin-left: 7px; font-size: 14.400px; font-weight: 600; flex: 1; color: #333; }
.f-eye { width: 14px; height: 10px; margin-right: 15px; }
.dbl { width: 14px; height: 14px; color: #444; }
.f-search { width: 180px; height: 30px; margin-top: 7px; border: 1px solid #aaa; background: #fff; display: flex; align-items: center; padding-left: 9px; gap: 9px; font-size: 12.200px; color: #444; border-radius: 2px; }
.s16 { width: 16px; height: 16px; color: #444; }
.f-sec { margin: 5px -8px 0; padding: 17px 12px 0 8px; border-top: 1px solid #bbb; display: flex; justify-content: space-between; font-size: 11.300px; line-height: 16px; color: #444; }
.f-sec.second { border: 0; margin-top: 28px; padding-top: 0; }
.dots { color: #888; letter-spacing: 1.500px; }
.f-box { width: 184px; height: 45px; margin-top: 8px; border: 1px solid #bbb; text-align: center; line-height: 45px; font-size: 11.300px; color: #444; background: #fff; }

/* page tabs */
.pages { height: 35px; display: flex; padding-left: 40px; background: #f3f2f1; align-items: stretch; font-size: 11.400px; color: #444; }
.nav { width: 40px; border-left: 1px solid #ddd; display: flex; align-items: center; justify-content: space-around; padding: 0 5px; }
.arrow { width: 0; height: 0; border: 4px solid transparent; }
.arrow.l { border-right-color: #c8c6c4; border-left: 0; }
.arrow.r { border-left-color: #c8c6c4; border-right: 0; }
.pg { display: flex; align-items: center; justify-content: center; gap: 3px; border-left: 1px solid #ccc; white-space: nowrap; }
.pg.active { width: 119px; background: #fff; border-bottom: 4px solid #f2c811; color: #333; font-weight: 600; padding-top: 3px; }
.p-fd { width: 58px; padding-right: 3px; }
.p-one { width: 76px; padding-right: 3px; }
.hide { width: 14px; height: 14px; margin-top: 4px; }
.pg-add { width: 39px; margin-top: 2px; background: #f2c811; display: flex; align-items: center; justify-content: center; }
.pg-add svg { width: 12px; height: 12px; }

/* viz */
.viz { width: 181px; border-left: 1px solid #ddd; background: #f3f2f1; }
.viz .p-head { padding: 0 7px 0 8px; }
.fields { width: 181px; border-left: 1px solid #ddd; background: #f3f2f1; }
.fields .p-head { padding: 0 8px; }
.p-head { height: 38px; display: flex; align-items: center; justify-content: space-between; font-size: 14.700px; font-weight: 600; color: #333; }
.build { padding-left: 8px; font-size: 10.800px; font-weight: 600; line-height: 15px; color: #333; }
.build-tabs { display: flex; padding-left: 8px; margin-top: 4px; height: 32px; }
.bt { width: 32px; height: 32px; display: flex; align-items: center; justify-content: center; }
.bt.on { background: #cfcdcb; }
.bt.on svg { width: 24px; height: 24px; }
.bt.fmt { margin-left: 33px; }
.bt.fmt svg { width: 25px; height: 27px; }
.notch-line { height: 12px; border-bottom: 1px solid #999; position: relative; }
.notch-line::after { content: ""; position: absolute; left: 20px; bottom: -5px; width: 9px; height: 9px; background: #f3f2f1; border-left: 1px solid #999; border-top: 1px solid #999; transform: rotate(45deg); }
.vgrid { display: grid; grid-template-columns: repeat(6, 27.800px); grid-auto-rows: 28px; padding: 9px 0 0 5.500px; align-items: center; justify-items: center; }
.vgrid svg { width: 18px; height: 18px; }
.k { fill: none; stroke: #444; stroke-width: 1; }
.kb { fill: none; stroke: #2b88d8; }
.kw { fill: #f3f2f1; stroke: #444; }
.hv { fill: none; stroke: #666; stroke-width: 2; }
.bl { fill: #7ab8ea; stroke: #1a6fb5; stroke-width: .9; }
.bl2 { fill: #7ab8ea; stroke: #1a6fb5; stroke-width: 1; }
.bl3 { fill: none; stroke: #1a6fb5; stroke-width: 1.300; }
.bl3t { fill: none; stroke: #f3f2f1; stroke-width: .6; }
.gy { fill: #bdbbb9; stroke: #777; stroke-width: .8; }
.gy2 { fill: #bdbbb9; stroke: #555; stroke-width: .8; }
.wt { fill: #fff; stroke: #444; stroke-width: .8; }
.v-card { width: 18px; height: 14px; border: 1px solid #444; background: #fff; display: flex; align-items: center; justify-content: center; }
.v-card span { font: 8.500px "Liberation Sans", sans-serif; color: #1a6fb5; letter-spacing: .1px; }
.v-txt { color: #2b7cc0; font: bold 16px/18px "Open Sans", sans-serif; }
.v-py { font-size: 16.500px; margin-top: -3px; }
.v-more { font-size: 13px; font-weight: 700; color: #555; }
.v-sep { margin-top: 6px; border-top: 1px solid #ddd; }
.w-label { margin: 9px 0 0 12px; font-size: 10.800px; line-height: 15px; color: #444; }
.w-label.drill { margin-top: 12px; font-weight: 600; }
.dash { margin: 5px 0 0 4px; width: 170px; height: 28px; border: 1px dashed #c8c6c4; background: #fff; line-height: 27px; padding-left: 10px; font-size: 11.200px; color: #444; white-space: nowrap; }
.dash.second { height: 26px; padding-left: 8px; line-height: 24px; margin-top: 10px; font-size: 11px; }
.tog-row { margin: 9px 6px 0 12px; height: 17px; display: flex; justify-content: space-between; align-items: center; font-size: 10.800px; color: #444; }
.tog-row + .tog-row { margin-top: 10px; }
.tog-row + .tog-row + .dash { margin-top: 11px; }
.tog { width: 32px; height: 16px; border-radius: 8px; display: flex; align-items: center; justify-content: space-between; padding: 0 2px 0 3px; font-size: 8.500px; border: 1px solid #777; background: #fff; font-weight: 600; }
.tog b { font-weight: 600; }
.tog i { width: 8px; height: 8px; border-radius: 50%; background: #555; }
.tog.on { background: #555; color: #fff; }
.tog.on i { background: #fff; }

/* fields */
.fd-search { margin: 7px 4px 9px; height: 27px; background: #fff; border: 1px solid #999; border-radius: 2px; display: flex; align-items: center; padding: 1px 0 0 6px; gap: 6px; font-size: 12.200px; color: #444; }
.fd-row { height: 24px; display: flex; align-items: center; padding-left: 9px; font-size: 10.800px; color: #666; }
.fd-chev { width: 7px; height: 12px; }
.fd-t { width: 14px; height: 14px; margin: 0 6px 0 5px; color: #333; }

/* status */
.status { height: 24px; flex: none; border-top: 1px solid #ddd; display: flex; align-items: center; justify-content: space-between; font-size: 10.500px; color: #555; padding-left: 5px; }
.zoom { display: flex; align-items: center; width: 221px; font-size: 12px; }
.z-m { width: 7px; font-weight: 700; }
.z-track { width: 100px; height: 1px; margin-left: 2px; background: #777; position: relative; }
.z-thumb { position: absolute; left: 26px; top: -5px; width: 4px; height: 11px; background: #555; }
.z-tick { position: absolute; left: 50px; top: -2px; width: 1px; height: 5px; background: #777; }
.z-p { margin-left: 6px; width: 10px; font-size: 13px; color: #444; }
.z-v { margin-left: 17px; width: 32px; font-size: 11px; color: #777; }
.z-fit { margin-left: 13px; width: 16px; height: 12px; }

/* taskbar */
.taskbar { height: 41px; flex: none; border-top: 1px solid #2b7cc0; background: linear-gradient(90deg, #cde3ee, #d5dfec 70%, #d6deea); display: flex; align-items: center; color: #111; }
.tb-start { width: 49px; display: flex; justify-content: center; }
.tb-start svg { width: 16px; height: 16px; }
.tb-search { width: 342px; height: 39px; background: #fff; display: flex; align-items: center; padding-left: 10px; font-size: 14.100px; border: 1px solid #ccc; color: #222; }
.tb-g { width: 18px; height: 18px; margin-right: 10px; color: #111; }
.tb-deco { width: 72px; height: 32px; margin-left: auto; margin-right: 2px; }
.tb-apps { display: flex; }
.app { width: 49px; height: 40px; display: flex; align-items: center; justify-content: center; position: relative; }
.app svg { width: 18px; height: 18px; }
.a-edge svg { width: 24px; height: 24px; }
.a-mail svg { width: 26px; height: 22px; }
.badge { position: absolute; right: 6px; bottom: 4px; width: 16px; height: 16px; border-radius: 50%; border: 1px solid #333; background: #ccc; font-size: 10px; line-height: 14px; text-align: center; }
.app:nth-child(5) svg { width: 22px; height: 20px; }
.a-pbi { width: 48px; background: #e6eef5; border-bottom: 2px solid #1a7fc4; margin-left: 1px; }
.a-pbi svg { width: 20px; height: 24px; }
.tray { margin-left: auto; display: flex; align-items: center; height: 40px; font-size: 13.500px; }
.news { width: 24px; height: 16px; }
.temp { margin-left: 8px; letter-spacing: -.3px; }
.wx { margin-left: 10px; }
.tr-up { width: 13px; height: 8px; margin-left: 16px; }
.tr-meet { width: 13px; height: 16px; margin-left: 11px; }
.tr-bat { width: 16px; height: 10px; margin-left: 9px; }
.clock { width: 66px; margin-left: 3px; display: flex; flex-direction: column; align-items: center; font-size: 12px; line-height: 18.500px; }
.notif { width: 52px; position: relative; display: flex; justify-content: center; padding-right: 14px; }
.notif svg { width: 17px; height: 15px; }
.notif span { position: absolute; left: 18px; top: 7px; width: 16px; height: 16px; border-radius: 50%; border: 1px solid #777; background: #ccc; font-size: 10px; line-height: 14px; text-align: center; font-weight: 600; }
```
